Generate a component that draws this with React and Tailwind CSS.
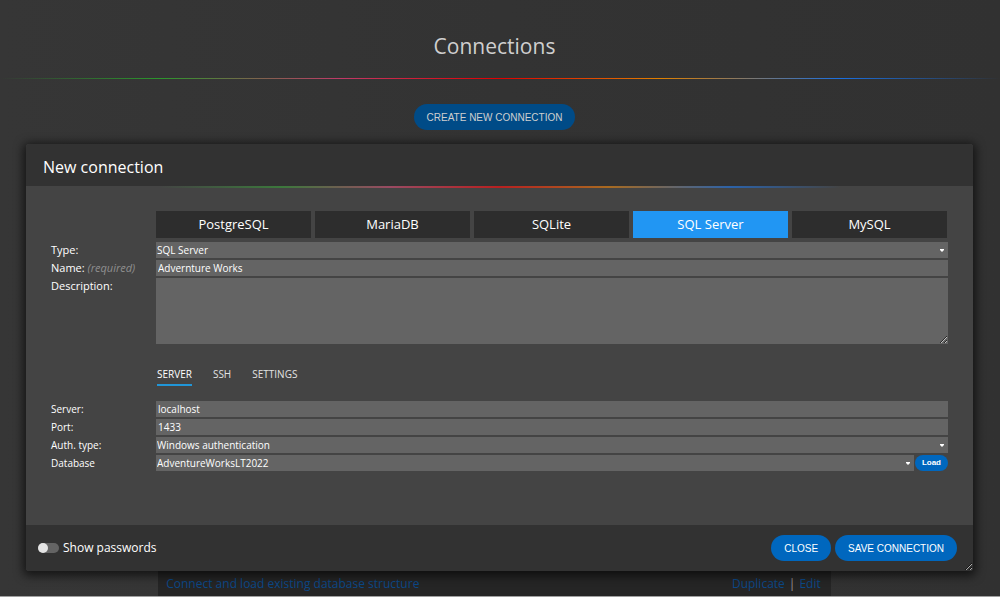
import { useState } from "react";

const engines = ["PostgreSQL", "MariaDB", "SQLite", "SQL Server", "MySQL"];
const sections = ["SERVER", "SSH", "SETTINGS"];

const fieldClass =
  "block h-4 w-full min-w-0 bg-[#646464] text-[10px] font-medium leading-4 text-white outline-none";
const pillClass = "h-[26px] rounded-full px-[13px] font-['Liberation_Sans',sans-serif] text-[10px]";

function Field({ id, label, hint, large, children }) {
  return (
    <div className="flex">
      <label
        htmlFor={id}
        className={`w-[105px] shrink-0 font-medium leading-4 text-white ${large ? "text-[11px]" : "text-[10px]"}`}
      >
        {label}
        {hint && <span className="font-normal italic text-[#8f8f8f]"> {hint}</span>}
      </label>
      <div className="flex min-w-0 flex-1 gap-px">{children}</div>
    </div>
  );
}

function SelectBox({ id, value, onChange, options }) {
  return (
    <div className="relative min-w-0 flex-1">
      <select id={id} value={value} onChange={onChange} className={`${fieldClass} appearance-none pl-px`}>
        {options.map((option) => (
          <option key={option}>{option}</option>
        ))}
      </select>
      <svg viewBox="0 0 4 3" className="pointer-events-none absolute right-1 top-[7px] h-[3px] w-1 fill-white">
        <path d="M0 0h4v1L2 3 0 1z" />
      </svg>
    </div>
  );
}

export default function App() {
  const [engine, setEngine] = useState("SQL Server");
  const [section, setSection] = useState("SERVER");
  const [name, setName] = useState("Advernture Works");
  const [description, setDescription] = useState("");
  const [server, setServer] = useState("localhost");
  const [port, setPort] = useState("1433");
  const [showPasswords, setShowPasswords] = useState(false);

  return (
    <div className="relative flex min-h-screen flex-col border-b border-[#a0a0a0] bg-gradient-to-r from-[#363636] via-[#333333] to-[#313131] font-['Open_Sans',sans-serif]">
      {/* Page behind the dialog */}
      <header>
        <h1 className="pb-4 pr-[11px] pt-[30px] text-center text-[21px] leading-8 text-[#cfcfcf]">Connections</h1>
        <div className="h-px bg-[linear-gradient(90deg,transparent,#2c962c_16%,#c03a68_34%,#e00000_50%,#e08000_66%,#1a6fe0_84%,transparent)]" />
      </header>

      <main className="flex flex-1 flex-col items-center pr-[11px] pt-[25px]">
        <button type="button" className={`${pillClass} bg-[#004b87] text-[#cfcfcf]`}>
          CREATE NEW CONNECTION
        </button>
        <div className="mt-8 flex w-[68%] flex-1 items-end justify-between bg-[#252525] px-2 pb-1 text-[12px] leading-4 text-[#9a9a9a]">
          <a href="#structure" className="text-[#0c4887]">Connect and load existing database structure</a>
          <div className="flex gap-1 pr-0.5">
            <a href="#duplicate" className="text-[#0c4887]">Duplicate</a>
            <span>|</span>
            <a href="#edit" className="text-[#0c4887]">Edit</a>
          </div>
        </div>
      </main>

      {/* Dialog */}
      <form
        role="dialog"
        aria-labelledby="dialog-title"
        onSubmit={(e) => e.preventDefault()}
        className="absolute left-[26px] right-[27px] top-36 resize overflow-hidden rounded-[3px] bg-[#444444] shadow-[0_2px_10px_3px_rgba(0,0,0,0.6)]"
      >
        <div className="bg-[#323232]">
          <h2 id="dialog-title" className="px-[17px] pb-[7px] pt-[11px] text-[16px] font-medium leading-6 text-white">
            New connection
          </h2>
        </div>
        <div className="mx-[14%] h-0.5 bg-[linear-gradient(90deg,transparent,#3c783c_18%,#9a4a62_34%,#b82020_50%,#a86a20_66%,#2c62a8_84%,transparent)]" />

        <div className="px-[25px] pb-[54px] pt-[23px]">
          <div className="mb-1 grid grid-cols-5 gap-1 pl-[105px] pr-px">
            {engines.map((item) => (
              <button
                key={item}
                type="button"
                onClick={() => setEngine(item)}
                className={`h-[27px] pt-px text-[13px] font-medium text-white ${
                  engine === item ? "bg-[#2196f3]" : "bg-[#2d2d2d]"
                }`}
              >
                {item}
              </button>
            ))}
          </div>

          <div className="flex flex-col gap-0.5">
            <Field id="type" label="Type:" large>
              <SelectBox id="type" value={engine} onChange={(e) => setEngine(e.target.value)} options={engines} />
            </Field>
            <Field id="name" label="Name:" hint="(required)" large>
              <input id="name" value={name} onChange={(e) => setName(e.target.value)} className={`${fieldClass} px-0.5`} />
            </Field>
            <Field id="description" label="Description:" large>
              <textarea
                id="description"
                value={description}
                onChange={(e) => setDescription(e.target.value)}
                className="block h-[66px] w-full resize bg-[#646464] px-0.5 text-[10px] text-white outline-none"
              />
            </Field>
          </div>

          <div className="flex gap-[21px] pb-[15px] pl-[106px] pt-[22px]">
            {sections.map((item) => (
              <button
                key={item}
                type="button"
                onClick={() => setSection(item)}
                className={`border-b-2 pb-px text-[10px] font-medium leading-[17px] ${
                  section === item ? "border-[#2196d8] text-white" : "border-transparent text-[#e2e2e2]"
                }`}
              >
                {item}
              </button>
            ))}
          </div>

          <div className="flex flex-col gap-0.5">
            <Field id="server" label="Server:">
              <input id="server" value={server} onChange={(e) => setServer(e.target.value)} className={`${fieldClass} px-0.5`} />
            </Field>
            <Field id="port" label="Port:">
              <input id="port" value={port} onChange={(e) => setPort(e.target.value)} className={`${fieldClass} px-0.5`} />
            </Field>
            <Field id="auth" label="Auth. type:">
              <SelectBox id="auth" options={["Windows authentication"]} />
            </Field>
            <Field id="database" label="Database">
              <SelectBox id="database" options={["AdventureWorksLT2022"]} />
              <button
                type="button"
                className="h-4 rounded-full bg-[#0067be] px-[7px] font-['Liberation_Sans',sans-serif] text-[8px] font-bold text-white"
              >
                Load
              </button>
            </Field>
          </div>
        </div>

        <div className="flex items-center gap-1 bg-[#323232] py-2.5 pl-3 pr-4">
          <input
            id="show-passwords"
            type="checkbox"
            role="switch"
            checked={showPasswords}
            onChange={(e) => setShowPasswords(e.target.checked)}
            className="h-2.5 w-[21px] appearance-none rounded-full bg-[#646464] before:block before:size-2.5 before:rounded-full before:bg-[#e4e4e4] checked:bg-[#2196f3] checked:before:ml-auto"
          />
          <label htmlFor="show-passwords" className="mr-auto text-[12px] font-medium leading-4 text-white">
            Show passwords
          </label>
          <button type="button" className={`${pillClass} bg-[#0067be] font-medium text-white`}>
            CLOSE
          </button>
          <button type="submit" className={`${pillClass} bg-[#0067be] font-medium text-white`}>
            SAVE CONNECTION
          </button>
        </div>
      </form>
    </div>
  );
}
